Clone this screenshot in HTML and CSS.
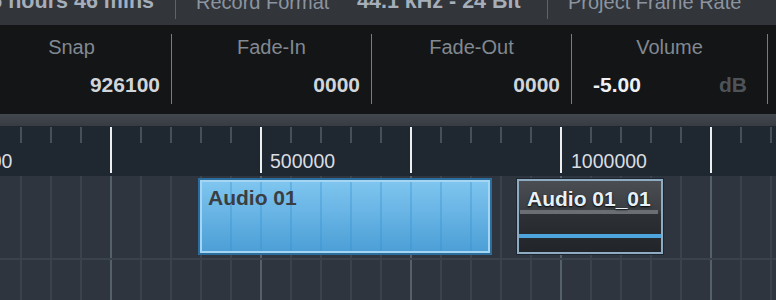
FILE: index.html
```html
<!DOCTYPE html>
<html lang="en">
<head>
  <meta charset="UTF-8">
  <title>Arrange View</title>
  <link rel="stylesheet" href="styles.css">
</head>
<body>

  <div class="topbar">
    <div class="tb-value tb-first"><span>6 hours 46 mins</span></div>
    <span class="tb-sep"></span>
    <span class="tb-label">Record Format</span>
    <span class="tb-value tb-format">44.1 kHz - 24 Bit</span>
    <span class="tb-sep"></span>
    <span class="tb-label">Project Frame Rate</span>
  </div>

  <div class="props">
    <div class="prop">
      <div class="prop-label">Snap</div>
      <div class="prop-value">926100</div>
    </div>
    <div class="prop">
      <div class="prop-label">Fade-In</div>
      <div class="prop-value">0000</div>
    </div>
    <div class="prop">
      <div class="prop-label">Fade-Out</div>
      <div class="prop-value">0000</div>
    </div>
    <div class="prop prop-volume">
      <div class="prop-label">Volume</div>
      <div class="prop-value">
        <span class="vol">-5.00</span>
        <span class="unit">dB</span>
      </div>
    </div>
  </div>

  <div class="ruler-head"></div>
  <div class="ruler">
    <span class="ruler-num" style="left:-31px">0000</span>
    <span class="ruler-num" style="left:270px">500000</span>
    <span class="ruler-num" style="left:571px">1000000</span>
  </div>

  <div class="tracks">
    <div class="track">
      <div class="clip clip-audio" style="left:198px;width:294px">
        <div class="clip-title">Audio 01</div>
      </div>
      <div class="clip clip-copy" style="left:517px;width:146px">
        <div class="clip-title">Audio 01_01</div>
        <div class="clip-rule"></div>
        <div class="clip-wave"></div>
      </div>
    </div>
    <div class="track track-last"></div>
  </div>

</body>
</html>
```

FILE: styles.css
```css
body {
  margin: 0;
  background: #2e353e;
  font-family: 'Liberation Sans', Arial, sans-serif;
  overflow: hidden;
}

/* top info bar */
.topbar {
  display: flex;
  align-items: flex-start;
  height: 25px;
  background: #323539;
  overflow: hidden;
  white-space: nowrap;
}

.tb-value {
  font-size: 21.5px;
  font-weight: bold;
  line-height: 21px;
  color: #a5aeb9;
  margin-top: -9px;
  flex: none;
}

.tb-first {
  display: flex;
  justify-content: flex-end;
  width: 175px;
  padding-right: 21px;
  box-sizing: border-box;
}

.tb-format {
  width: 190px;
}

.tb-label {
  font-size: 20px;
  line-height: 21px;
  color: #8b94a0;
  margin-top: -8px;
  width: 161px;
  flex: none;
}

.tb-sep {
  width: 1px;
  height: 19px;
  background: #5b6571;
  margin-right: 20px;
  flex: none;
}

/* event properties */
.props {
  display: flex;
  height: 89px;
  background: #141516;
  margin-left: -28px;
}

.prop {
  width: 200px;
  height: 70px;
  margin-top: 9px;
  border-right: 1px solid #767c84;
  box-sizing: border-box;
  flex: none;
}

.prop-volume {
  width: 196px;
}

.prop-label {
  font-size: 20px;
  line-height: 20px;
  padding-top: 3px;
  text-align: center;
  color: #818992;
}

.prop-value {
  margin-top: 17px;
  padding-right: 11px;
  font-size: 21px;
  font-weight: bold;
  line-height: 21px;
  text-align: right;
  color: #d1d5da;
}

.prop-volume .prop-value {
  display: flex;
  justify-content: space-between;
  padding: 0 20px 0 21px;
}

.vol {
  color: #eef2f7;
}

.unit {
  color: #4e5359;
}

/* ruler */
.ruler-head {
  height: 12px;
  background: linear-gradient(#43484f, #373c43);
}

.ruler {
  position: relative;
  height: 50px;
  overflow: hidden;
  background:
    linear-gradient(to right, #eceef0 0 2px, transparent 2px) 110px 1px / 150px 46px repeat-x,
    linear-gradient(to right, #47505a 0 2px, transparent 2px) 20px 1px / 30px 16px repeat-x,
    #1f2731;
}

.ruler-num {
  position: absolute;
  top: 25px;
  font-size: 19.5px;
  line-height: 20px;
  color: #d9dde1;
}

/* tracks */
.tracks {
  height: 124px;
  overflow: hidden;
  background:
    linear-gradient(to right, #56606b 0 2px, transparent 2px) 110px 0 / 150px 100% repeat-x,
    linear-gradient(to right, #3a424b 0 2px, transparent 2px) 20px 0 / 30px 100% repeat-x,
    #2e353e;
}

.track {
  position: relative;
  height: 82px;
  border-bottom: 2px solid #3a424b;
}

.track-last {
  height: 40px;
  border-bottom: none;
}

.clip {
  position: absolute;
  box-sizing: border-box;
}

.clip-title {
  font-size: 21px;
  font-weight: bold;
  line-height: 23px;
  padding: 6px 0 0 8px;
  white-space: nowrap;
}

.clip-audio {
  top: 2px;
  height: 77px;
  border: 2px solid #2b6d9c;
  box-shadow: inset 0 0 0 2px #a4d6f4;
  background:
    linear-gradient(to right, rgba(52, 146, 208, 0.35) 0 2px, transparent 2px) 0 0 / 30px 100% repeat-x,
    linear-gradient(#80c6f0, #4b9ed6);
}

.clip-audio .clip-title {
  color: #3a3d41;
}

.clip-copy {
  top: 3px;
  height: 75px;
  border: 2px solid #8eabc2;
  box-shadow: 0 0 0 1px #1b2631;
  background: linear-gradient(#4a4e53 0, #3b3f44 29px, #2d3034 33px, #212428 100%);
}

.clip-copy .clip-title {
  color: #e8f0f8;
  text-shadow: 0 1px 2px #000, 0 0 1px #243444;
}

.clip-rule {
  height: 4px;
  margin: 0 3px 0 1px;
  background: #6b6f74;
}

.clip-wave {
  height: 4px;
  margin-top: 20px;
  background: #4ea4dc;
}
```
